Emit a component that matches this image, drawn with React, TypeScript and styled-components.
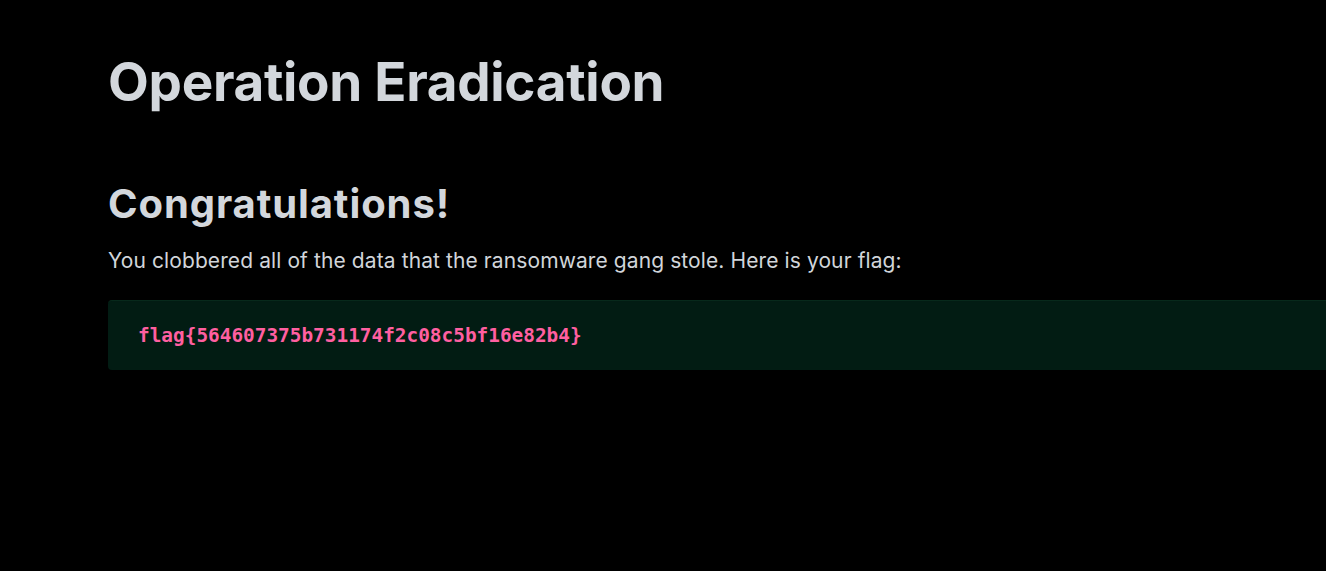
import React from "react";
import styled, { createGlobalStyle } from "styled-components";

const GlobalStyle = createGlobalStyle`
    html, body {
        margin: 0;
        padding: 0;
        background: #000000;
        overflow: hidden;
    }
`;

const Page = styled.main`
    min-height: 571px;
    padding: 50px 0 0 108px;
    box-sizing: border-box;
    color: #d1d5da;
    font-family: Inter, "Noto Sans", sans-serif;
`;

const Title = styled.h1`
    margin: 0;
    font-size: 53px;
    font-weight: 700;
    line-height: 64px;
    letter-spacing: -0.3px;
    color: #d3d7dc;
`;

const Heading = styled.h2`
    margin: 65px 0 0;
    font-size: 40px;
    font-weight: 700;
    line-height: 50px;
    letter-spacing: 0.9px;
    color: #d3d7dc;
`;

const Message = styled.p`
    margin: 17px 0 0;
    font-size: 21px;
    line-height: 30px;
    color: #d1d5da;
    letter-spacing: 0.1px;
`;

const FlagBox = styled.pre`
    margin: 24px 0 0;
    width: 1300px;
    height: 70px;
    box-sizing: border-box;
    padding: 0 30px;
    display: flex;
    align-items: center;
    background: #021c13;
    border-top: 1px solid #07291b;
    border-radius: 4px;
`;

const FlagText = styled.code`
    font-family: "DejaVu Sans Mono", "Liberation Mono", monospace;
    font-size: 19.4px;
    font-weight: 700;
    color: #ff5fa0;
`;

export default function App() {
    return (
        <>
            <GlobalStyle />
            <Page>
                <Title>Operation Eradication</Title>
                <Heading>Congratulations!</Heading>
                <Message>You clobbered all of the data that the ransomware gang stole. Here is your flag:</Message>
                <FlagBox>
                    <FlagText>flag{"{564607375b731174f2c08c5bf16e82b4}"}</FlagText>
                </FlagBox>
            </Page>
        </>
    );
}
